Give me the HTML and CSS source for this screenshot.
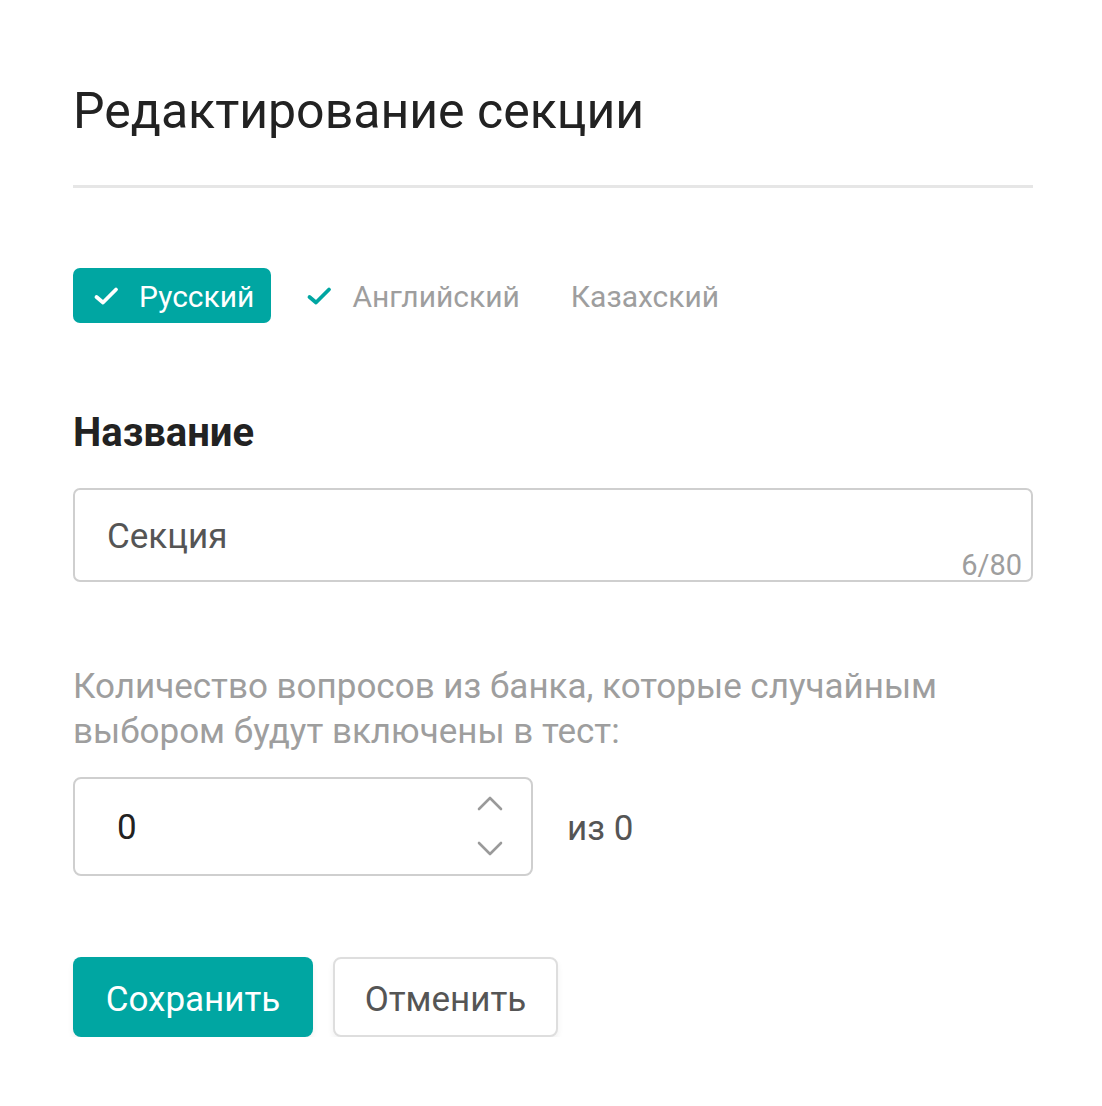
FILE: index.html
```html
<!DOCTYPE html>
<html lang="ru">
<head>
<meta charset="utf-8">
<link rel="stylesheet" href="styles.css">
</head>
<body>
<div class="page">
  <h1 class="title">Редактирование секции</h1>
  <div class="divider"></div>
  <div class="tabs">
    <button class="tab tab-active">
      <svg class="check" viewBox="0 0 26 20" width="26" height="20"><path d="M3.5 11l6.5 5.5L23 3.5" fill="none" stroke="currentColor" stroke-width="3.8" stroke-linecap="round" stroke-linejoin="round"/></svg>
      <span>Русский</span>
    </button>
    <button class="tab tab-done">
      <svg class="check" viewBox="0 0 26 20" width="26" height="20"><path d="M3.5 11l6.5 5.5L23 3.5" fill="none" stroke="currentColor" stroke-width="3.8" stroke-linecap="round" stroke-linejoin="round"/></svg>
      <span>Английский</span>
    </button>
    <button class="tab tab-plain">
      <span>Казахский</span>
    </button>
  </div>
  <h2 class="field-title">Название</h2>
  <div class="text-field">
    <span class="text-value">Секция</span>
    <span class="counter">6/80</span>
  </div>
  <p class="hint">Количество вопросов из банка, которые случайным выбором будут включены в тест:</p>
  <div class="count-row">
    <div class="number-field">
      <span class="number-value">0</span>
      <div class="spin">
        <svg viewBox="0 0 30 20" width="30" height="20"><path d="M4 16L15 5l11 11" fill="none" stroke="#9a9a9a" stroke-width="2.6" stroke-linecap="round" stroke-linejoin="round"/></svg>
        <svg viewBox="0 0 30 20" width="30" height="20"><path d="M4 4l11 11L26 4" fill="none" stroke="#9a9a9a" stroke-width="2.6" stroke-linecap="round" stroke-linejoin="round"/></svg>
      </div>
    </div>
    <span class="of-total">из 0</span>
  </div>
  <div class="actions">
    <button class="btn btn-primary">Сохранить</button>
    <button class="btn btn-secondary">Отменить</button>
  </div>
</div>
</body>
</html>
```
FILE: styles.css
```css
* { box-sizing: border-box; }
html, body { margin: 0; padding: 0; background: #fff; }
body { font-family: Roboto, "Noto Sans", sans-serif; color: #222; }
.page { width: 1102px; padding: 83px 69px 0 73px; }
.title { margin: 0; font-size: 50px; font-weight: 400; line-height: 56px; color: #222; }
.divider { height: 3px; background: #e6e6e6; margin-top: 46px; }
.tabs { display: flex; align-items: center; margin-top: 80px; gap: 28px; }
.tab { display: inline-flex; align-items: center; height: 55px; border: 0; border-radius: 7px; background: transparent; font-family: inherit; font-size: 30px; color: #9e9e9e; cursor: pointer; }
.check { display: block; flex: none; }
.tab-active { background: #00a6a2; color: #fff; padding: 1px 17px 0 20px; gap: 20px; }
.tab-done { padding: 1px 18px 0 7px; gap: 20px; }
.tab-done .check { color: #00a6a2; }
.tab-plain { padding: 1px 2px 0 5px; }
.field-title { margin: 86px 0 0; font-size: 40px; font-weight: 700; line-height: 48px; color: #222; }
.text-field { position: relative; margin-top: 31px; height: 94px; border: 2px solid #cfcfcf; border-radius: 7px; display: flex; align-items: center; padding: 2px 0 0 32px; }
.text-value { font-size: 35px; color: #555; }
.counter { position: absolute; right: 9px; bottom: 0; font-size: 29px; line-height: 29px; color: #9e9e9e; }
.hint { margin: 82px 0 0; font-size: 35px; line-height: 45px; color: #9e9e9e; }
.count-row { display: flex; align-items: center; gap: 34px; margin-top: 23px; }
.number-field { width: 460px; height: 99px; border: 2px solid #cfcfcf; border-radius: 8px; display: flex; align-items: center; justify-content: space-between; padding: 2px 26px 0 42px; }
.number-value { font-size: 35px; color: #222; }
.spin { display: flex; flex-direction: column; gap: 26px; margin-top: -3px; }
.spin svg { display: block; }
.of-total { font-size: 35px; color: #555; padding-top: 4px; }
.actions { display: flex; gap: 20px; margin-top: 81px; }
.btn { height: 80px; border-radius: 8px; font-family: inherit; font-size: 35px; padding: 4px 0 0; cursor: pointer; box-shadow: 0 4px 6px rgba(0,0,0,0.06); }
.btn-primary { background: #00a6a2; color: #fff; border: 0; width: 240px; }
.btn-secondary { background: #fff; color: #555; border: 2px solid #dedede; width: 225px; }
```
